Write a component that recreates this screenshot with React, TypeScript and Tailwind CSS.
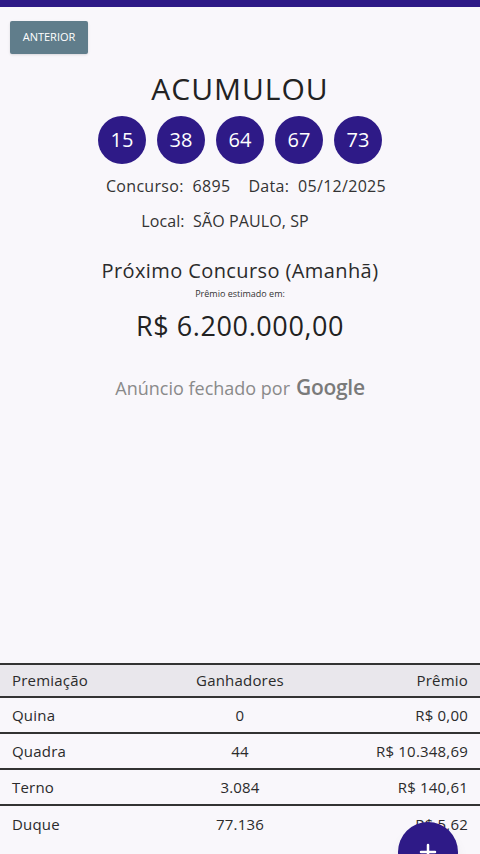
import React from 'react';
import { Plus } from 'lucide-react';

const numbers = ['15', '38', '64', '67', '73'];

const prizes = [
  { faixa: 'Quina', ganhadores: '0', premio: 'R$ 0,00' },
  { faixa: 'Quadra', ganhadores: '44', premio: 'R$ 10.348,69' },
  { faixa: 'Terno', ganhadores: '3.084', premio: 'R$ 140,61' },
  { faixa: 'Duque', ganhadores: '77.136', premio: 'R$ 5,62' },
];

export default function App() {
  return (
    <div
      className="relative w-[480px] h-[854px] overflow-hidden bg-[#f9f7fb] text-[#2b2b2b]"
      style={{ fontFamily: '"Open Sans", "Noto Sans", sans-serif' }}
    >
      <div className="h-[7px] bg-[#2e1a87]" />

      <div className="px-[10px] pt-[14px]">
        <button className="h-[33px] w-[78px] rounded-[2px] bg-[#607d8b] text-[11px] text-white shadow-sm">
          ANTERIOR
        </button>
      </div>

      <div className="flex flex-col items-center">
        <h1 className="mt-[17px] text-[30px] leading-[36px] tracking-[1px] text-[#222]">ACUMULOU</h1>

        <div className="mt-[9px] flex gap-[11px]">
          {numbers.map((n) => (
            <div
              key={n}
              className="flex h-[48px] w-[48px] items-center justify-center rounded-full bg-[#2e1a87] text-[20px] text-white"
            >
              {n}
            </div>
          ))}
        </div>

        <div className="mt-[11px] flex gap-[18px] pl-[12px] text-[16px] leading-[22px] tracking-[0.3px] text-[#333]">
          <span>Concurso:&nbsp; 6895</span>
          <span>Data:&nbsp; 05/12/2025</span>
        </div>
        <div className="mt-[13px] mr-[30px] text-[16px] leading-[22px] tracking-[0.1px] text-[#333]">
          Local:&nbsp; SÃO PAULO, SP
        </div>

        <div className="mt-[26px] text-[20px] leading-[26px] tracking-[0.4px] text-[#2b2b2b]">
          Próximo Concurso (Amanhã)
        </div>
        <div className="mt-[4px] text-[9px] leading-[12px] text-[#333]">Prêmio estimado em:</div>
        <div className="mt-[9px] text-[27px] leading-[34px] tracking-[0.6px] text-[#222]">R$ 6.200.000,00</div>

        <div className="mt-[32px] flex items-baseline gap-[6px] text-[18px] leading-[24px] text-[#8a8a8a]">
          <span>Anúncio fechado por</span>
          <span className="text-[21px] font-semibold tracking-[-0.3px] text-[#7a7a7a]">Google</span>
        </div>
      </div>

      <div className="absolute left-0 right-0 top-[663px] text-[15px] tracking-[0.2px] text-[#2b2b2b]">
        <div className="grid h-[35px] grid-cols-3 items-center border-y-2 border-[#333] bg-[#e9e7ec] px-[12px]">
          <span>Premiação</span>
          <span className="text-center">Ganhadores</span>
          <span className="text-right">Prêmio</span>
        </div>
        {prizes.map((p, i) => (
          <div
            key={p.faixa}
            className={`grid h-[36px] grid-cols-3 items-center px-[12px] ${
              i < prizes.length - 1 ? 'border-b-2 border-[#333]' : ''
            }`}
          >
            <span>{p.faixa}</span>
            <span className="text-center">{p.ganhadores}</span>
            <span className="text-right">{p.premio}</span>
          </div>
        ))}
      </div>

      <div className="absolute left-[398px] top-[822px] flex h-[60px] w-[60px] items-center justify-center rounded-full bg-[#2e1a87] shadow-lg">
        <Plus className="h-6 w-6 text-white" strokeWidth={2.5} />
      </div>
    </div>
  );
}
